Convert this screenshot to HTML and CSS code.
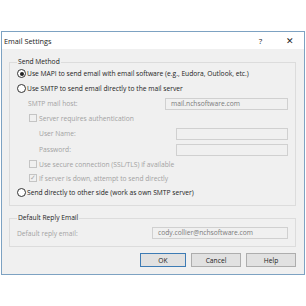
FILE: index.html
```html
<!DOCTYPE html>
<html lang="en">
<head>
    <meta charset="UTF-8">
    <title>Email Settings</title>
    <link rel="stylesheet" href="styles.css">
</head>
<body>
    <div class="dialog">
        <div class="titlebar">
            <span class="title">Email Settings</span>
            <span class="title-btn help">?</span>
            <span class="title-btn close">&#x2715;</span>
        </div>

        <div class="content">
            <fieldset class="group">
                <legend>Send Method</legend>

                <label class="row radio-row">
                    <span class="radio checked"></span>Use MAPI to send email with email software (e.g., Eudora, Outlook, etc.)
                </label>
                <label class="row radio-row">
                    <span class="radio"></span>Use SMTP to send email directly to the mail server
                </label>

                <div class="row field-row host-row disabled">
                    <span class="field-label">SMTP mail host:</span>
                    <span class="input host-input">mail.nchsoftware.com</span>
                </div>

                <label class="row check-row disabled">
                    <span class="check"></span>Server requires authentication
                </label>

                <div class="row field-row sub-row user-row disabled">
                    <span class="field-label">User Name:</span>
                    <span class="input auth-input"></span>
                </div>
                <div class="row field-row sub-row disabled">
                    <span class="field-label">Password:</span>
                    <span class="input auth-input"></span>
                </div>

                <label class="row check-row disabled">
                    <span class="check"></span>Use secure connection (SSL/TLS) if available
                </label>
                <label class="row check-row disabled">
                    <span class="check checked">&#x2713;</span>If server is down, attempt to send directly
                </label>

                <label class="row radio-row last">
                    <span class="radio"></span>Send directly to other side (work as own SMTP server)
                </label>
            </fieldset>

            <fieldset class="group reply-group">
                <legend>Default Reply Email</legend>
                <div class="row field-row reply-row disabled">
                    <span class="field-label">Default reply email:</span>
                    <span class="input reply-input">cody.collier@nchsoftware.com</span>
                </div>
            </fieldset>

            <div class="buttons">
                <button class="btn btn-default">OK</button>
                <button class="btn">Cancel</button>
                <button class="btn">Help</button>
            </div>
        </div>
    </div>
</body>
</html>
```

FILE: styles.css
```css
:root {
    --face: #f0f0f0;
    --frame: #7da2c2;
    --group-line: #dcdcdc;
    --muted: #a2a2a2;
    --input-line: #d0d0d0;
    --text: #222222;
}

* {
    margin: 0;
    padding: 0;
    box-sizing: border-box;
}

body {
    font-family: "Open Sans", "Noto Sans", sans-serif;
    font-size: 6.7px;
    color: var(--text);
    background: #ffffff;
    padding-top: 31px;
}

.dialog {
    width: 304px;
    margin-left: 1px;
    border: 1px solid var(--frame);
    background: var(--face);
}

/* title bar */
.titlebar {
    height: 17px;
    background: #ffffff;
    display: flex;
    align-items: center;
    padding-left: 2px;
}

.title {
    flex: 1;
    font-size: 7.3px;
}

.title-btn {
    width: 29px;
    text-align: center;
    font-size: 8px;
}

.close {
    font-size: 9px;
}

/* body */
.content {
    padding: 9px 8px 7px 7px;
}

.group {
    border: 1px solid var(--group-line);
    padding: 0 7px 6px 7px;
}

.group legend {
    padding: 0 1px;
    margin-left: 0;
    line-height: 8px;
    font-size: 6.7px;
}

.row {
    display: flex;
    align-items: center;
    white-space: nowrap;
}

.radio-row {
    height: 15px;
}

.radio-row.last {
    height: 14px;
}

.check-row {
    height: 14px;
    padding-left: 12px;
}

.field-row {
    height: 15px;
}

.host-row {
    padding-left: 11px;
}

.sub-row {
    padding-left: 22px;
}

.user-row {
    height: 17px;
}

.reply-group {
    margin-top: 8px;
    padding: 3px 7px 5px 7px;
}

.reply-row {
    height: 16px;
    padding-left: 0;
}

.disabled {
    color: var(--muted);
}

.field-label {
    flex: 1;
}

.input {
    height: 12px;
    border: 1px solid var(--input-line);
    background: var(--face);
    color: #7a7a7a;
    padding-left: 5px;
    line-height: 10px;
}

.host-input {
    width: 123px;
}

.auth-input {
    width: 112px;
}

.reply-input {
    width: 136px;
    padding-left: 5px;
}

/* radio and check boxes */
.radio {
    width: 9px;
    height: 9px;
    border: 1px solid #333333;
    border-radius: 50%;
    background: #ffffff;
    margin-right: 1px;
    position: relative;
    flex-shrink: 0;
}

.radio.checked::after {
    content: "";
    position: absolute;
    left: 1.5px;
    top: 1.5px;
    width: 4px;
    height: 4px;
    border-radius: 50%;
    background: #222222;
}

.check {
    width: 8px;
    height: 8px;
    border: 1px solid #c4c4c4;
    background: var(--face);
    margin-right: 2px;
    flex-shrink: 0;
    font-size: 7px;
    line-height: 6px;
    text-align: center;
    color: #a8a8a8;
}

/* buttons */
.buttons {
    display: flex;
    justify-content: flex-end;
    gap: 5px;
    margin-top: 6px;
}

.btn {
    width: 50px;
    height: 14px;
    border: 1px solid #adadad;
    background: #e1e1e1;
    font-family: inherit;
    font-size: 6.7px;
    color: var(--text);
}

.btn-default {
    width: 46px;
    border-color: #3d7bb4;
}
```
